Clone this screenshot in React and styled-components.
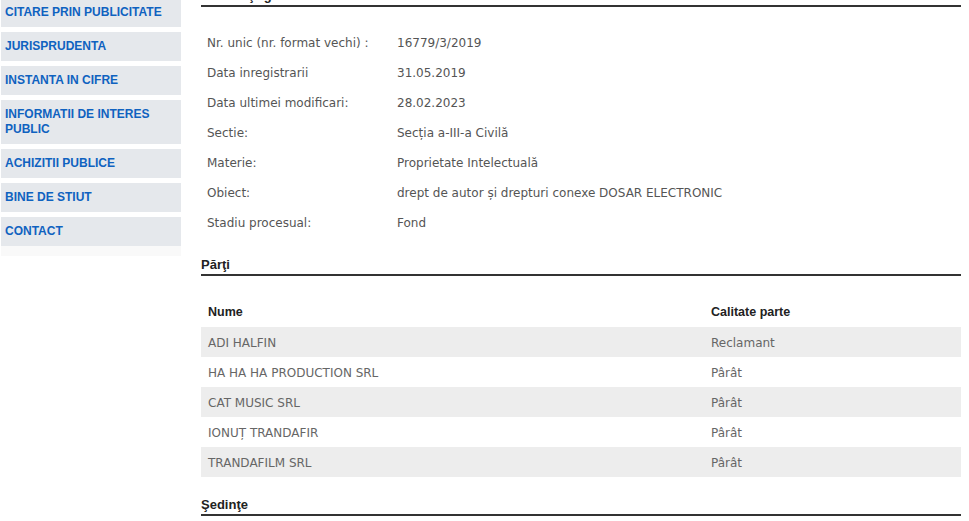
import React from "react";
import styled, { createGlobalStyle } from "styled-components";

const GlobalStyle = createGlobalStyle`
  body {
    margin: 0;
    background: #ffffff;
    overflow: hidden;
  }
`;

const Layout = styled.div`
  display: flex;
  align-items: flex-start;
  margin-top: -36px;
`;

const Sidebar = styled.nav`
  display: flex;
  flex-direction: column;
  gap: 5px;
  width: 180px;
  margin-left: 1px;
  flex-shrink: 0;
`;

const MenuItem = styled.a`
  display: block;
  padding: 7px 4px;
  background: #e5e8ec;
  font-family: "Liberation Sans", Arial, sans-serif;
  font-size: 12px;
  line-height: 15px;
  font-weight: 700;
  color: #0f62c0;
  text-decoration: none;
  text-transform: uppercase;
`;

const MenuFooter = styled.div`
  height: 10px;
  margin-top: -5px;
  background: #f9f9f9;
`;

const Main = styled.main`
  width: 760px;
  margin-left: 20px;
  padding-top: 24px;
`;

const SectionTitle = styled.h3`
  margin: ${p => p.$gap || 0}px 0 0;
  padding-bottom: 1px;
  border-bottom: 2px solid #333333;
  font-family: "Liberation Sans", Arial, sans-serif;
  font-size: 13px;
  line-height: 16px;
  font-weight: 700;
  color: #222222;
`;

const Details = styled.div`
  display: grid;
  grid-template-columns: 190px 1fr;
  grid-auto-rows: 30px;
  margin-top: 20px;
  padding-left: 6px;
  font-family: "DejaVu Sans", Verdana, sans-serif;
  font-size: 12px;
  color: #555555;
`;

const Cell = styled.div`
  display: flex;
  align-items: center;
  padding-top: 2px;
  white-space: nowrap;
`;

const Parties = styled.div`
  margin-top: 21px;
`;

const PartyRow = styled.div`
  display: grid;
  grid-template-columns: 503px 1fr;
  box-sizing: border-box;
  height: 30px;
  align-items: center;
  padding: ${p => (p.$head ? "0 0 0 7px" : "2px 0 0 7px")};
  background: ${p => (p.$shaded ? "#ededed" : "transparent")};
  font-family: ${p =>
    p.$head
      ? `"Liberation Sans", Arial, sans-serif`
      : `"DejaVu Sans", Verdana, sans-serif`};
  font-size: ${p => (p.$head ? "12.5px" : "12px")};
  font-weight: ${p => (p.$head ? 700 : 400)};
  color: ${p => (p.$head ? "#222222" : "#666666")};
`;

const menu = [
  "Dosare",
  "Citare prin publicitate",
  "Jurisprudenta",
  "Instanta in cifre",
  "Informatii de interes public",
  "Achizitii publice",
  "Bine de stiut",
  "Contact"
];

const details = [
  ["Nr. unic (nr. format vechi) :", "16779/3/2019"],
  ["Data inregistrarii", "31.05.2019"],
  ["Data ultimei modificari:", "28.02.2023"],
  ["Sectie:", "Secția a-III-a Civilă"],
  ["Materie:", "Proprietate Intelectuală"],
  ["Obiect:", "drept de autor și drepturi conexe DOSAR ELECTRONIC"],
  ["Stadiu procesual:", "Fond"]
];

const parties = [
  ["ADI HALFIN", "Reclamant"],
  ["HA HA HA PRODUCTION SRL", "Pârât"],
  ["CAT MUSIC SRL", "Pârât"],
  ["IONUȚ TRANDAFIR", "Pârât"],
  ["TRANDAFILM SRL", "Pârât"]
];

export default function App() {
  return (
    <>
      <GlobalStyle />
      <Layout>
        <Sidebar>
          {menu.map(item =>
            <MenuItem key={item} href="#">
              {item}
            </MenuItem>
          )}
          <MenuFooter />
        </Sidebar>
        <Main>
          <SectionTitle>Informaţii generale</SectionTitle>
          <Details>
            {details.map(([label, value]) =>
              <React.Fragment key={label}>
                <Cell>{label}</Cell>
                <Cell>{value}</Cell>
              </React.Fragment>
            )}
          </Details>
          <SectionTitle $gap={20}>Părţi</SectionTitle>
          <Parties>
            <PartyRow $head>
              <span>Nume</span>
              <span>Calitate parte</span>
            </PartyRow>
            {parties.map(([name, role], i) =>
              <PartyRow key={name} $shaded={i % 2 === 0}>
                <span>{name}</span>
                <span>{role}</span>
              </PartyRow>
            )}
          </Parties>
          <SectionTitle $gap={20}>Şedinţe</SectionTitle>
        </Main>
      </Layout>
    </>
  );
}
